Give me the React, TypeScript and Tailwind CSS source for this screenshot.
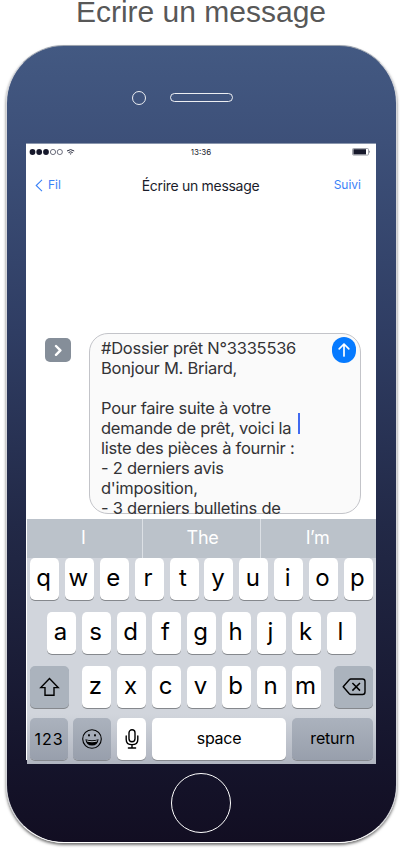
import React from "react";

const keyBase =
  "flex h-[42px] shrink-0 items-center justify-center rounded-[5px] shadow-[0_1px_0_#85888d] text-black";

function LetterKey({ label }: { label: string }) {
  return (
    <div className={`${keyBase} w-[29px] bg-white`}>
      <span className="relative -left-px -top-px text-[24px] leading-none">{label}</span>
    </div>
  );
}

function StatusBar() {
  return (
    <div className="grid h-[16px] shrink-0 grid-cols-3 items-center pl-[3px] pr-[5px] text-[#1a1c2e]">
      <svg width="48" height="8" viewBox="0 0 48 8" fill="none">
        <circle cx="3.5" cy="4" r="2.9" fill="#16182b" />
        <circle cx="10.2" cy="4" r="2.9" fill="#16182b" />
        <circle cx="17" cy="4" r="2.9" fill="#16182b" />
        <circle cx="24" cy="4" r="2.6" stroke="#33364a" strokeWidth=".7" />
        <circle cx="30.8" cy="4" r="2.6" stroke="#33364a" strokeWidth=".7" />
        <path d="M38 3Q41.6.2 45.2 3M39.5 4.6Q41.6 3 43.7 4.6" stroke="#26293b" strokeWidth="1" />
        <path d="M40.5 5.4h2.2l-1.1 1.3z" fill="#26293b" />
      </svg>
      <span className="pl-[2px] text-center text-[8px] leading-none">13:36</span>
      <svg className="-mt-px justify-self-end" width="19" height="8" viewBox="0 0 19 8" fill="none">
        <rect x=".5" y=".5" width="16" height="6.6" rx="1" stroke="#8d8f99" strokeWidth=".8" />
        <rect x="1.4" y="1.2" width="12.6" height="5.2" fill="#16182b" />
        <path d="M17.3 2.3q1.5 1.5 0 3z" fill="#555866" />
      </svg>
    </div>
  );
}

function Keyboard() {
  return (
    <div className="ml-px h-[245px] shrink-0 bg-[linear-gradient(#d1d5dc_0,#d1d5dc_195px,#b0b5c0_245px)]">
      <div className="flex h-[39px] bg-[#bbc2ca] text-[18px] leading-[38px] text-white">
        <div className="w-[116px] border-r border-[#dce0e5] pr-[2px] text-center">I</div>
        <div className="w-[118px] border-r border-[#dce0e5] pl-[2px] text-center tracking-[-0.3px]">The</div>
        <div className="flex-1 pr-[2px] text-center tracking-[-0.4px]">I’m</div>
      </div>
      <div className="flex flex-col px-[3px]">
        <div className="flex w-[343px] justify-between">
          {"qwertyuiop".split("").map((c) => <LetterKey key={c} label={c} />)}
        </div>
        <div className="mt-[12px] flex gap-[6px] pl-[17px]">
          {"asdfghjkl".split("").map((c) => <LetterKey key={c} label={c} />)}
        </div>
        <div className="mt-[12px] flex justify-between">
          <div className={`${keyBase} w-[39px] bg-[#abb3bd]`}>
            <svg width="22" height="20" viewBox="0 0 22 20" fill="none" stroke="#000" strokeWidth="1.4" strokeLinejoin="miter">
              <path d="M10.5 1.5 1.8 10.6H6V18.2H15V10.6H19.2Z" />
            </svg>
          </div>
          <div className="flex gap-[6px]">
            {"zxcvbnm".split("").map((c) => <LetterKey key={c} label={c} />)}
          </div>
          <div className={`${keyBase} w-[39px] bg-[#abb3bd]`}>
            <svg width="24" height="18" viewBox="0 0 24 18" fill="none" stroke="#000" strokeWidth="1.4" strokeLinejoin="round">
              <path d="M8.8 1H20.5Q23 1 23 3.5V14Q23 16.5 20.5 16.5H8.8Q8 16.5 7.3 15.8L1.2 8.8 7.3 1.7Q8 1 8.8 1Z" />
              <path d="m10.4 5 7.6 7.6m0-7.6-7.6 7.6" strokeWidth="1.5" />
            </svg>
          </div>
        </div>
        <div className="mt-[10px] flex">
          <div className={`${keyBase} w-[38px] bg-linear-to-b from-[#abb2bd] to-[#989fac] text-[16px] tracking-[0.9px]`}>123</div>
          <div className={`${keyBase} ml-[5px] w-[38px] bg-linear-to-b from-[#abb2bd] to-[#989fac]`}>
            <svg width="20" height="20" viewBox="0 0 20 20" fill="none">
              <circle cx="10" cy="10" r="9.3" stroke="#000" strokeWidth="1.1" />
              <ellipse cx="7" cy="6.2" rx=".9" ry="1.3" fill="#000" />
              <ellipse cx="13" cy="6.2" rx=".9" ry="1.3" fill="#000" />
              <path d="M3.4 10.2Q10 12.2 16.6 10.2 15.8 16.6 10 16.6T3.4 10.2Z" fill="#000" />
              <path d="M4.6 11.3Q10 13 15.4 11.3L15 12.5Q10 13.9 5 12.5Z" fill="#c5cad1" />
            </svg>
          </div>
          <div className={`${keyBase} ml-[6px] w-[29px] bg-white`}>
            <svg width="14" height="20" viewBox="0 0 14 20" fill="none" stroke="#000" strokeWidth="1.4" strokeLinecap="round">
              <rect x="4" y=".8" width="6" height="12" rx="3" />
              <path d="M1.2 7V10.4Q1.2 15.6 7 15.6T12.8 10.4V7M7 15.6V19M3.4 19H10.6" />
            </svg>
          </div>
          <div className={`${keyBase} ml-[6px] w-[134px] bg-white text-[16px] tracking-[-0.3px]`}>
            <span className="relative -top-px">space</span>
          </div>
          <div className={`${keyBase} ml-[6px] w-[81px] bg-linear-to-b from-[#abb2bd] to-[#989fac] text-[16px] tracking-[-0.2px]`}>
            <span className="relative -top-px">return</span>
          </div>
        </div>
      </div>
    </div>
  );
}

export default function App() {
  return (
    <div className="h-[851px] w-[402px] overflow-hidden bg-white font-['Inter',sans-serif]">
      <h1 className="h-[45px] text-center font-['Liberation_Sans',sans-serif] text-[30px] leading-[24px] text-[#585858]">
        Ecrire un message
      </h1>
      <div className="ml-[6px] flex h-[798px] w-[391px] flex-col rounded-[58px] border border-[#d5d6da] border-t-[#9ca3ae] border-b-white bg-[linear-gradient(#435982_0%,#3d5079_12%,#2f3d63_36%,#222947_60%,#15142b_90%,#120e22_100%)] shadow-[0_2px_3px_rgba(0,0,0,0.55)]">
        <div className="flex h-[97px] shrink-0 items-start pl-[125px] pt-[45px]">
          <div className="size-[14px] rounded-full border border-white/90" />
          <div className="ml-[24px] mt-[2px] h-[9px] w-[63px] rounded-full border border-white/90" />
        </div>
        <div className="mb-[4px] ml-[19px] flex h-[617px] w-[350px] shrink-0 flex-col border-t border-[#8a96ad] bg-white">
          <StatusBar />
          <div className="grid h-[50px] shrink-0 grid-cols-[80px_1fr_80px] items-center pl-[9px] pr-[15px] text-[#3b82f7]">
            <div className="flex items-center text-[12px]">
              <svg width="8" height="13" viewBox="0 0 8 13" fill="none" stroke="currentColor" strokeWidth="1.1">
                <path d="M7 .8 1.2 6.5 7 12.2" />
              </svg>
              <span className="ml-[5px]">Fil</span>
            </div>
            <span className="whitespace-nowrap pl-[5px] text-center text-[14px] tracking-[-0.3px] text-[#1a1c2b]">Écrire un message</span>
            <span className="text-right text-[12px]">Suivi</span>
          </div>
          <div className="flex h-[309px] shrink-0 items-start pl-[19px] pt-[123px]">
            <div className="mt-[5px] flex h-[24px] w-[26px] items-center justify-center rounded-[5px] bg-[#858e99]">
              <svg width="8" height="13" viewBox="0 0 8 13" fill="none" stroke="#fff" strokeWidth="2.4" strokeLinecap="round" strokeLinejoin="round">
                <path d="m2 2 4.4 4.4L2 10.8" />
              </svg>
            </div>
            <div className="relative ml-[18px] h-[181px] w-[272px] rounded-[19px] border border-[#c3c4c9] bg-[#fafafa]">
              <div className="h-[182px] overflow-hidden whitespace-pre pl-[11px] pt-[4px] text-[16.5px] leading-[20px] tracking-[-0.25px] text-[#333336]">
                {"#Dossier prêt N°3335536\nBonjour M. Briard,\n\nPour faire suite à votre\ndemande de prêt, voici la\nliste des pièces à fournir :\n- 2 derniers avis\nd'imposition,\n- 3 derniers bulletins de"}
              </div>
              <div className="absolute right-[4px] top-[3px] flex h-[26px] w-[24px] items-center justify-center rounded-full bg-[#067aff]">
                <svg width="12" height="14" viewBox="0 0 12 14" fill="none" stroke="#fff" strokeWidth="1.7" strokeLinecap="round" strokeLinejoin="round">
                  <path d="M6 13V1M1.2 5.8 6 1l4.8 4.8" />
                </svg>
              </div>
              <div className="absolute left-[208px] top-[79px] h-[21px] w-[2px] bg-[#416af0]" />
            </div>
          </div>
          <Keyboard />
        </div>
        <div className="ml-[164px] mt-[9px] size-[60px] shrink-0 rounded-full border border-white" />
      </div>
    </div>
  );
}
